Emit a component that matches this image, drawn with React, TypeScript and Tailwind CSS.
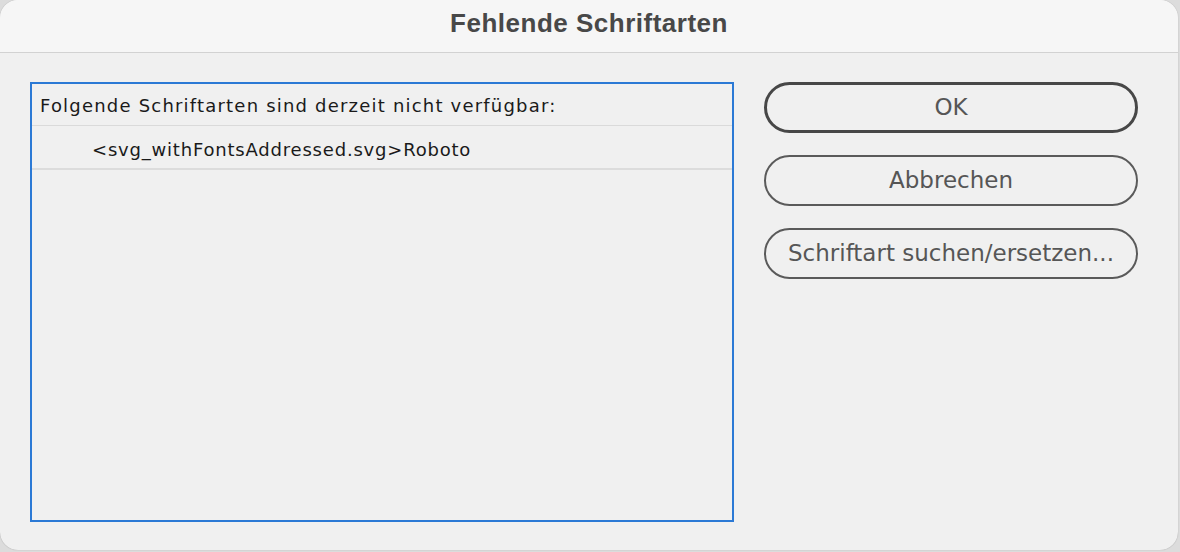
const buttons = ['OK', 'Abbrechen', 'Schriftart suchen/ersetzen...'];

const App = () => {
    return (
        <div className="w-[1180px] h-[552px] bg-[#dcdcdc]" style={{ fontFamily: '"DejaVu Sans", sans-serif' }}>
            <div className="w-[1178px] h-[550px] rounded-[18px] bg-[#f0f0f0] overflow-hidden flex flex-col shadow-[0_0_1px_rgba(0,0,0,0.35)]">
                <div className="h-[53px] shrink-0 bg-[#f6f6f6] border-b border-[#d2d2d2] flex items-center justify-center pb-[6px]">
                    <h1 className="text-[26px] font-bold text-[#484848] tracking-[0.5px]" style={{ fontFamily: '"Liberation Sans", sans-serif' }}>
                        Fehlende Schriftarten
                    </h1>
                </div>

                <div className="flex pt-[29px] pl-[30px] gap-[30px]">
                    <div className="w-[704px] h-[440px] border-2 border-[#2b79d5] bg-[#f0f0f0]">
                        <div className="h-[42px] border-b border-[#dadada] flex items-center pl-[8px] pt-[2px] text-[18px] tracking-[1.2px] text-[#1a1a1a]">
                            Folgende Schriftarten sind derzeit nicht verfügbar:
                        </div>
                        <div className="h-[44px] border-b-2 border-[#dcdcdc] flex items-center pl-[60px] pt-[4px] text-[18px] tracking-[0.8px] text-[#1a1a1a]">
                            &lt;svg_withFontsAddressed.svg&gt;Roboto
                        </div>
                    </div>

                    <div className="flex flex-col gap-[22px] w-[374px]">
                        {buttons.map((label, i) => (
                            <button
                                key={label}
                                className={`h-[51px] rounded-full flex items-center justify-center text-[23px] text-[#565656] bg-[#f0f0f0] ${i === 0 ? 'border-[3px] border-[#474747]' : 'border-2 border-[#5a5a5a]'}`}
                            >
                                {label}
                            </button>
                        ))}
                    </div>
                </div>
            </div>
        </div>
    );
};

export default App;
